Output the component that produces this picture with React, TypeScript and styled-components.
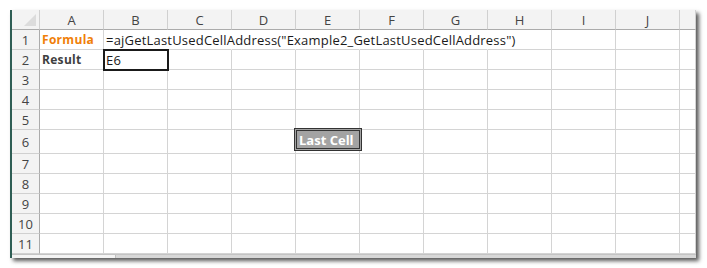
import * as React from 'react';
import styled, { createGlobalStyle } from 'styled-components';

const COLS = ['A', 'B', 'C', 'D', 'E', 'F', 'G', 'H', 'I', 'J', ''];
const ROW_HEIGHTS = [20, 20, 20, 20, 20, 24, 20, 20, 20, 20, 20];
// columns B..G of row 1 are covered by the overflowing formula text
const OVERFLOW_LAST = 6;

const GlobalStyle = createGlobalStyle`
  html, body {
    margin: 0;
    padding: 0;
    background: #ffffff;
  }
  body {
    font-family: 'Open Sans', 'Noto Sans', sans-serif;
  }
`;

export default function App() {
  return (
    <>
      <GlobalStyle />
      <Page>
        <Frame>
          <Sheet>
            <Corner>
              <CornerTriangle />
            </Corner>
            {COLS.map((c, i) => (
              <ColHeader key={'h' + i}>{c}</ColHeader>
            ))}
            {ROW_HEIGHTS.map((h, r) => (
              <React.Fragment key={'r' + r}>
                <RowHeader $h={h}>{r + 1}</RowHeader>
                {COLS.map((_, c) => {
                  const covered = r === 0 && c >= 1 && c <= OVERFLOW_LAST;
                  if (r === 0 && c === 0)
                    return (
                      <Cell key={c} $h={h}>
                        <Label $tone="orange">Formula</Label>
                      </Cell>
                    );
                  if (r === 0 && c === 1)
                    return (
                      <Cell key={c} $h={h} $covered $front>
                        <Value>=ajGetLastUsedCellAddress("Example2_GetLastUsedCellAddress")</Value>
                      </Cell>
                    );
                  if (r === 1 && c === 0)
                    return (
                      <Cell key={c} $h={h}>
                        <Label $tone="dark">Result</Label>
                      </Cell>
                    );
                  if (r === 1 && c === 1)
                    return (
                      <Cell key={c} $h={h} $selected>
                        <Value>E6</Value>
                      </Cell>
                    );
                  return <Cell key={c} $h={h} $covered={covered} />;
                })}
              </React.Fragment>
            ))}
            <LastCellButton>Last Cell</LastCellButton>
          </Sheet>
          <ScrollStrip>
            <ScrollThumb />
          </ScrollStrip>
        </Frame>
      </Page>
    </>
  );
}

const Page = styled.div`
  width: 707px;
  height: 268px;
  padding: 10px 0 0 10px;
  box-sizing: border-box;
`;

const Frame = styled.div`
  width: 686px;
  border-left: 2px solid #2f5e55;
  background: #ffffff;
  box-shadow: 3px 3px 4px rgba(0, 0, 0, 0.65);
  box-sizing: border-box;
  overflow: hidden;
`;

const Sheet = styled.div`
  position: relative;
  display: grid;
  grid-template-columns: 28px repeat(10, 64px) 16px;
  background: #ffffff;
`;

const Corner = styled.div`
  position: relative;
  height: 20px;
  box-sizing: border-box;
  background: #f3f3f3;
  border-right: 1px solid #d0d0d0;
  border-bottom: 1px solid #ababab;
`;

const CornerTriangle = styled.div`
  position: absolute;
  right: 3px;
  bottom: 3px;
  width: 0;
  height: 0;
  border-left: 12px solid transparent;
  border-bottom: 12px solid #dcdcdc;
`;

const ColHeader = styled.div`
  height: 20px;
  box-sizing: border-box;
  background: #f3f3f3;
  border-right: 1px solid #d0d0d0;
  border-bottom: 1px solid #ababab;
  display: flex;
  align-items: center;
  justify-content: center;
  font-size: 13px;
  color: #444444;
`;

const RowHeader = styled.div<{ $h: number }>`
  height: ${(p) => p.$h}px;
  box-sizing: border-box;
  background: #f3f3f3;
  border-right: 1px solid #ababab;
  border-bottom: 1px solid #d0d0d0;
  display: flex;
  align-items: center;
  justify-content: center;
  font-size: 13px;
  color: #444444;
`;

const Cell = styled.div<{ $h: number; $covered?: boolean; $front?: boolean; $selected?: boolean }>`
  position: relative;
  height: ${(p) => p.$h}px;
  box-sizing: border-box;
  border-right: 1px solid ${(p) => (p.$covered ? 'transparent' : '#d4d4d4')};
  border-bottom: 1px solid #d4d4d4;
  display: flex;
  align-items: center;
  padding-left: 2px;
  white-space: nowrap;
  overflow: visible;
  z-index: ${(p) => (p.$front ? 2 : 0)};
  ${(p) =>
    p.$selected &&
    `
    outline: 2px solid #1a1a1a;
    outline-offset: -1px;
    z-index: 3;
  `}
`;

const Label = styled.span<{ $tone: 'orange' | 'dark' }>`
  font-weight: 700;
  font-size: 12px;
  letter-spacing: 0.3px;
  color: ${(p) => (p.$tone === 'orange' ? '#f07f09' : '#404040')};
`;

const Value = styled.span`
  font-size: 13px;
  letter-spacing: 0.2px;
  color: #1a1a1a;
`;

const LastCellButton = styled.div`
  position: absolute;
  left: 282px;
  top: 118px;
  width: 68px;
  height: 23px;
  box-sizing: border-box;
  border: 3px double #333333;
  background: #a3a3a3;
  color: #ffffff;
  font-weight: 700;
  font-size: 13px;
  display: flex;
  align-items: center;
  padding-left: 2px;
  z-index: 4;
`;

const ScrollStrip = styled.div`
  height: 3px;
  background: #d8d8d8;
  border-top: 1px solid #c4c4c4;
`;

const ScrollThumb = styled.div`
  width: 103px;
  height: 3px;
  background: #f4f4f4;
  border-right: 1px solid #c0c0c0;
`;
